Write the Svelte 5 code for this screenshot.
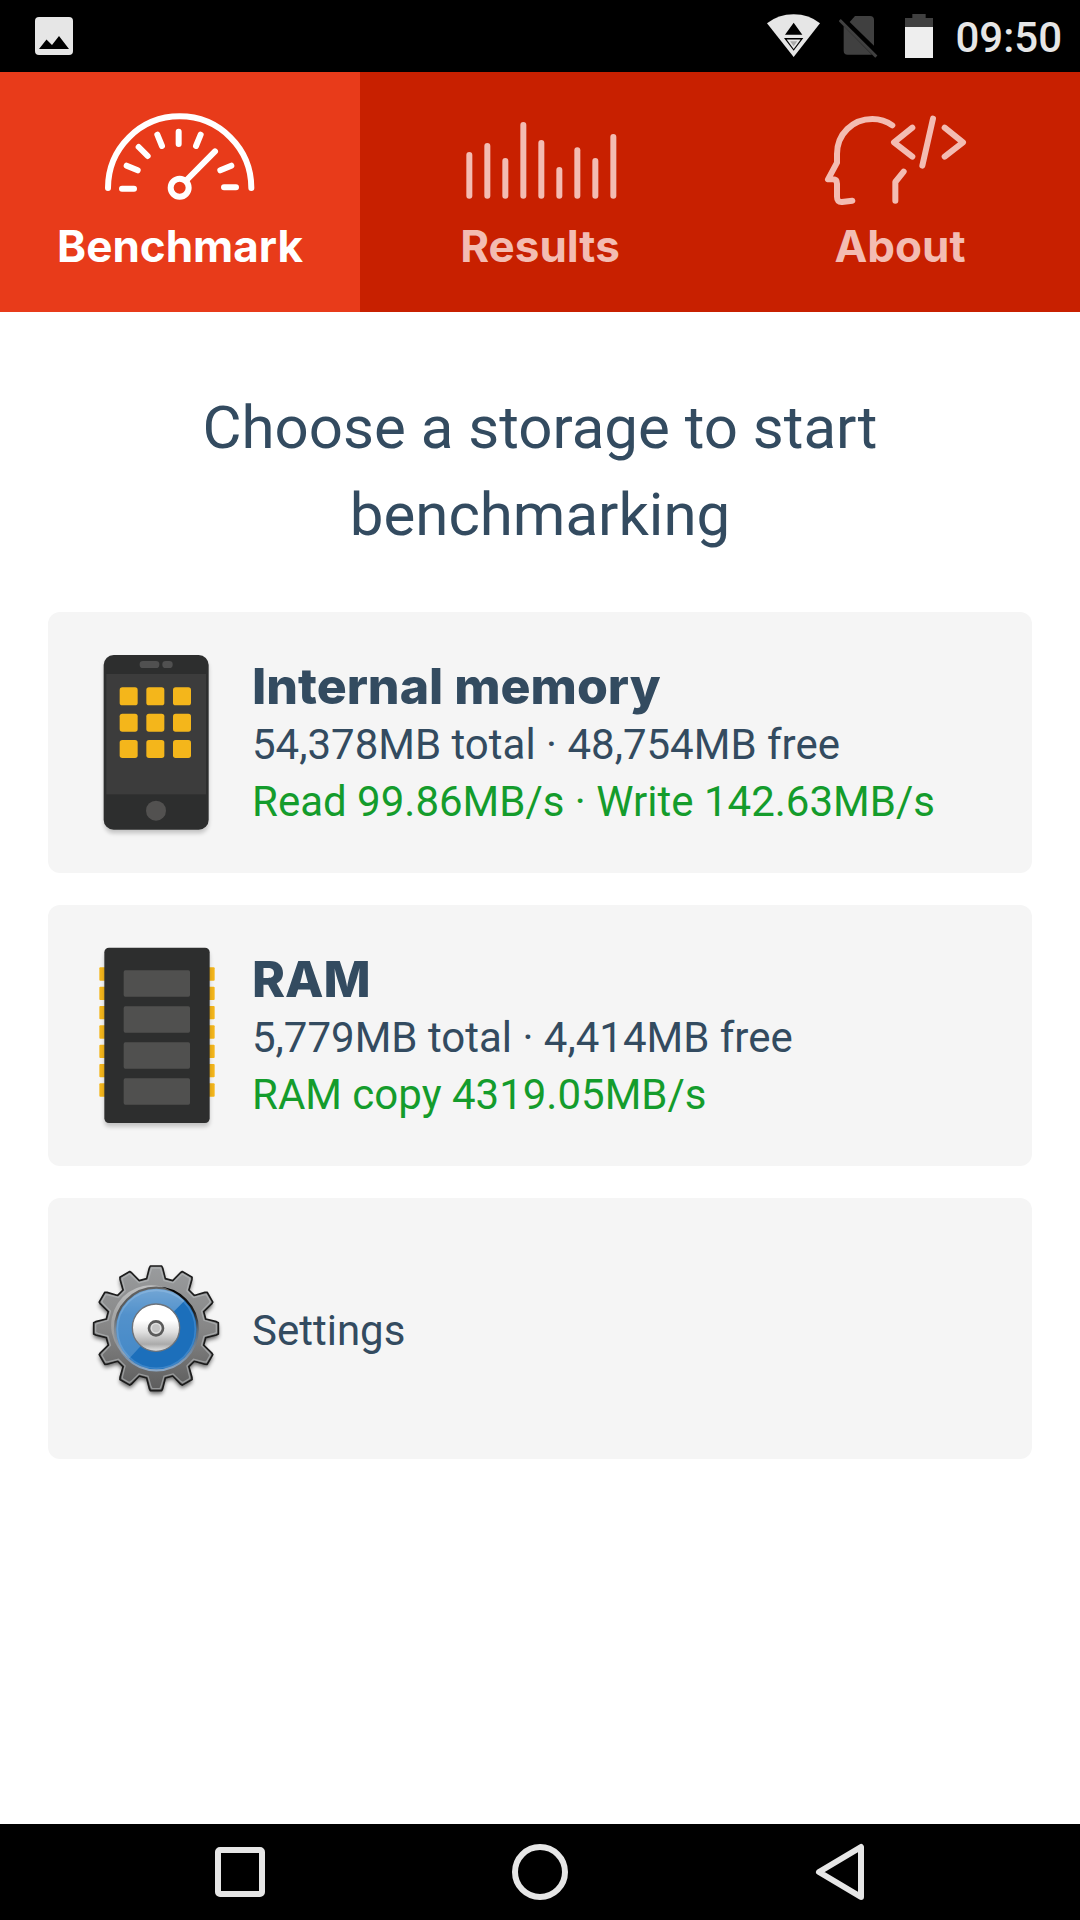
<script>
  let active = $state('Benchmark');
  const tabs = ['Benchmark', 'Results', 'About'];

  const bars = [249, 222, 267, 159, 213, 294, 235, 267, 195];
  const apps = [0, 1, 2].flatMap((r) => [0, 1, 2].map((c) => ({ x: 239 + c * 80, y: 262 + r * 79 })));
  const pins = [0, 1, 2, 3, 4, 5, 6].map((i) => 232 + i * 58);
  const chips = [0, 1, 2, 3].map((i) => 241 + i * 108);

  function gearPath(cx, cy, tip, root, tipHalf, rootHalf) {
    const points = [];
    for (let i = 0; i < 12; i++) {
      const a = (i * Math.PI) / 6;
      for (const [along, r] of [[-rootHalf, root], [-tipHalf, tip - 6], [3 - tipHalf, tip], [tipHalf - 3, tip], [tipHalf, tip - 6], [rootHalf, root]]) {
        const x = cx + r * Math.sin(a) + along * Math.cos(a);
        const y = cy - r * Math.cos(a) + along * Math.sin(a);
        points.push(`${x.toFixed(1)} ${y.toFixed(1)}`);
      }
    }
    return `M${points.join('L')}Z`;
  }
  const gear = gearPath(288, 415, 187, 149, 20, 28);
  const gearInner = gearPath(288, 415, 181, 144, 15, 24);
</script>

<div class="screen">
  <header class="status">
    <svg class="photo" viewBox="0 0 38 38" aria-hidden="true">
      <rect width="38" height="38" rx="4" fill="#e6e6e6" />
      <path d="M4 32L11.500 22.500L17 28L24 19L34 32Z" fill="#000" />
    </svg>
    <div class="indicators">
      <svg width="54" height="48" viewBox="141 36 162 144" aria-hidden="true">
        <path d="M141 70Q175 43 221 43T300 70L221 171Z" fill="#e6e6e6" />
        <path d="M221 68L247 104H195ZM192 114H250L221 152Z" fill="#000" />
        <path d="M205 121H237L221 143Z" fill="#aaaaaa" stroke="#e6e6e6" stroke-width="5" />
      </svg>
      <svg width="40" height="48" viewBox="357 36 120 144" aria-hidden="true">
        <path d="M405 48H450Q462 48 462 60V137L389 66ZM371 78L456 164H383Q371 164 371 152Z" fill="#404040" />
        <path d="M359 60L469 170" stroke="#404040" stroke-width="9" />
      </svg>
      <svg width="40" height="48" viewBox="531 36 120 144" aria-hidden="true">
        <path d="M555 54H577V42H617V54H639V82H555Z" fill="#404040" />
        <path d="M555 81H639V174H555Z" fill="#eeeeee" />
      </svg>
      <time>09:50</time>
    </div>
  </header>

  <nav class="tabs">
    {#each tabs as tab}
      <button class="tab" class:active={active === tab} onclick={() => (active = tab)}>
        {#if tab === 'Benchmark'}
          <svg class="line" viewBox="300 324 480 300" aria-hidden="true">
            <path d="M324 564A215 215 0 0 1 754 564" />
            <path d="M366 566H402M380 497L413 511M416 441L443 468M472 404L486 438M536 395V432M602 404L588 438M694 497L661 511M672 562H708M645 454L560 540" />
            <circle cx="539" cy="563" r="27" />
          </svg>
        {:else if tab === 'Results'}
          <svg class="line" viewBox="300 108 480 300" aria-hidden="true">
            {#each bars as top, i}
              <path d={`M${328 + i * 54} ${top}V371`} />
            {/each}
          </svg>
        {:else}
          <svg class="line" viewBox="300 324 480 300" aria-hidden="true">
            <path d="M517 376C499 363 477 357 457 357C398 357 351 402 351 462V488L324 538H338Q351 538 351 551V590Q351 607 366 606L397 602" />
            <path d="M551 515L526 546V602M577 383L522 427L577 470M639 356L607 497M674 383L729 427L674 470" />
          </svg>
        {/if}
        <span>{tab}</span>
      </button>
    {/each}
  </nav>

  <main>
    <h1>Choose a storage to start benchmarking</h1>

    <div class="cards">
      <button class="card">
        <svg class="art" viewBox="132 135 432 585" aria-hidden="true">
          <rect class="shade" x="192" y="176" width="314" height="524" rx="30" />
          <rect x="191" y="165" width="315" height="524" rx="30" fill="#2d2e2e" />
          <rect x="199" y="222" width="299" height="361" fill="#3c3c3c" />
          <rect x="299" y="183" width="59" height="21" rx="10" fill="#505050" />
          <rect x="367" y="183" width="31" height="21" rx="10" fill="#505050" />
          {#each apps as app}
            <rect x={app.x} y={app.y} width="54" height="54" rx="8" fill="#f4b61b" />
          {/each}
          <circle cx="348" cy="632" r="30" fill="#525150" />
        </svg>
        <span class="info">
          <strong>Internal memory</strong>
          <span>54,378MB total · 48,754MB free</span>
          <span class="speed">Read 99.86MB/s · Write 142.63MB/s</span>
        </span>
      </button>

      <button class="card">
        <svg class="art" viewBox="132 144 432 585" aria-hidden="true">
          {#each pins as y}
            <rect x="178" {y} width="346" height="40" rx="3" fill="#f4b61b" />
          {/each}
          <rect class="shade" x="193" y="185" width="316" height="525" rx="14" />
          <rect x="193" y="173" width="316" height="526" rx="14" fill="#2d2e2e" />
          {#each chips as y}
            <rect x="251" {y} width="199" height="79" rx="5" fill="#50504f" />
          {/each}
        </svg>
        <span class="info">
          <strong>RAM</strong>
          <span>5,779MB total · 4,414MB free</span>
          <span class="speed">RAM copy 4319.05MB/s</span>
        </span>
      </button>

      <button class="card">
        <svg class="art" viewBox="72 123 432 585" aria-hidden="true">
          <defs>
            <linearGradient id="metal" x1="0" y1="0" x2="0" y2="1">
              <stop offset="0" stop-color="#9a9c9e" />
              <stop offset="0.500" stop-color="#868686" />
              <stop offset="1" stop-color="#5c5c5c" />
            </linearGradient>
            <linearGradient id="disc" x1="0" y1="0" x2="0" y2="1">
              <stop offset="0.350" stop-color="#ffffff" />
              <stop offset="0.600" stop-color="#dedede" />
              <stop offset="0.850" stop-color="#aaaaaa" />
              <stop offset="1" stop-color="#e6e6e6" />
            </linearGradient>
            <linearGradient id="gloss" x1="0" y1="0" x2="0" y2="1">
              <stop offset="0" stop-color="#ffffff" stop-opacity="0.400" />
              <stop offset="0.400" stop-color="#ffffff" stop-opacity="0.240" />
              <stop offset="1" stop-color="#ffffff" stop-opacity="0.180" />
            </linearGradient>
            <linearGradient id="rim" x1="0" y1="0" x2="0" y2="1">
              <stop offset="0" stop-color="#000000" />
              <stop offset="0.300" stop-color="#222222" />
              <stop offset="0.500" stop-color="#5c6874" />
              <stop offset="1" stop-color="#8ca8c6" />
            </linearGradient>
          </defs>
          <path class="shade gear" d={gear} />
          <path d={gear} fill="url(#metal)" stroke="#1c1c1c" stroke-width="5" stroke-linejoin="round" />
          <path d={gearInner} fill="none" stroke="#b9bcbe" stroke-opacity="0.600" stroke-width="4" />
          <circle cx="289" cy="417" r="124" fill="#1c6fbb" stroke="url(#rim)" stroke-width="7" />
          <circle cx="289" cy="418" r="117" fill="none" stroke="#6ba4dc" stroke-opacity="0.400" stroke-width="5" />
          <path d="M289 417L207 506A120 120 0 0 1 340 306Q362 318 373 333Z" fill="url(#gloss)" />
          <circle cx="288" cy="413" r="71" fill="url(#disc)" stroke="#6d737a" stroke-width="4" />
          <circle cx="288" cy="415" r="21" fill="#dedede" stroke="#5a5a5a" stroke-width="8" />
          <circle cx="288" cy="415" r="12" fill="#c4c4c4" />
        </svg>
        <span class="info single"><span>Settings</span></span>
      </button>
    </div>
  </main>

  <nav class="system">
    <button aria-label="Recent apps">
      <svg viewBox="0 0 60 60"><rect x="8" y="8" width="44" height="44" rx="2" /></svg>
    </button>
    <button aria-label="Home">
      <svg viewBox="0 0 60 60"><circle cx="30" cy="30" r="25" /></svg>
    </button>
    <button aria-label="Back">
      <svg viewBox="0 0 60 60"><path d="M51 5V55L9 30Z" /></svg>
    </button>
  </nav>
</div>

<style>
  :global(body) {
    background: #fff;
  }
  .screen {
    display: flex;
    flex-direction: column;
    min-height: 100vh;
    font-family: Roboto, sans-serif;
    color: #334b60;
  }
  button {
    margin: 0;
    padding: 0;
    border: 0;
    background: none;
    color: inherit;
    font: inherit;
    cursor: pointer;
  }
  svg {
    display: block;
    flex: none;
  }
  .status {
    display: flex;
    align-items: center;
    justify-content: space-between;
    height: 72px;
    padding: 0 18px 0 35px;
    background: #000;
  }
  .photo {
    width: 38px;
    height: 38px;
  }
  .indicators {
    display: flex;
    align-items: center;
    gap: 18px;
  }
  time {
    padding-top: 4px;
    font-size: 42px;
    font-weight: 500;
    line-height: 48px;
    color: #e6e6e6;
  }
  .tabs {
    display: grid;
    grid-template-columns: repeat(3, 1fr);
    background: #c82000;
  }
  .tab {
    display: flex;
    flex-direction: column;
    align-items: center;
    gap: 12px;
    padding: 36px 0 40px;
    color: #f3bcb2;
    font-family: Inter, sans-serif;
    font-size: 44px;
    font-weight: 700;
    line-height: 52px;
  }
  .tab.active {
    background: #e83b1a;
    color: #fff;
  }
  .line {
    width: 160px;
    height: 100px;
    fill: none;
    stroke: currentColor;
    stroke-width: 18;
    stroke-linecap: round;
    stroke-linejoin: round;
  }
  main {
    flex: 1;
    padding: 72px 48px;
  }
  h1 {
    max-width: 800px;
    margin: 0 auto 54px;
    font-size: 60px;
    font-weight: 400;
    line-height: 87px;
    text-align: center;
  }
  .cards {
    display: grid;
    gap: 32px;
  }
  .card {
    display: flex;
    align-items: center;
    gap: 24px;
    padding: 33px 36px;
    border-radius: 12px;
    background: #f5f5f5;
    text-align: left;
  }
  .art {
    width: 144px;
    height: 195px;
  }
  .shade {
    fill: #000;
    opacity: 0.2;
    filter: blur(6px);
  }
  .gear {
    opacity: 0.6;
    transform: translateY(9px);
  }
  .info {
    display: grid;
    font-size: 42px;
    line-height: 57px;
  }
  .single {
    padding-top: 4px;
  }
  strong {
    font-family: Inter, sans-serif;
    font-size: 50px;
    font-weight: 800;
    line-height: 60px;
  }
  .speed {
    color: #149c2c;
  }
  .system {
    display: grid;
    grid-template-columns: repeat(3, 300px);
    justify-content: center;
    background: #000;
  }
  .system button {
    display: grid;
    place-items: center;
    height: 96px;
  }
  .system svg {
    width: 60px;
    height: 60px;
    fill: none;
    stroke: #e6e6e6;
    stroke-width: 6;
    stroke-linejoin: round;
  }
</style>
